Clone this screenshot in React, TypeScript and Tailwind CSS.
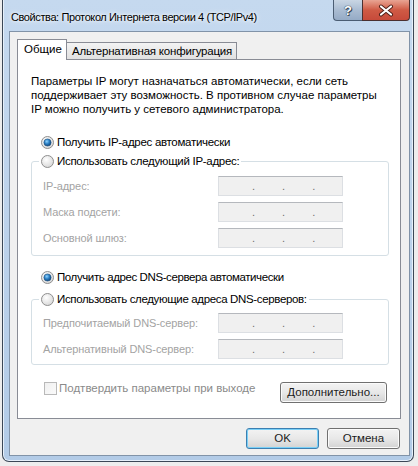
import React from 'react'

const FONT = "font-['Liberation_Sans',Arial,sans-serif]"

const Radio = ({ checked }: { checked?: boolean }) => (
  <svg width="13" height="13" viewBox="0 0 13 13" className="shrink-0">
    <defs>
      <radialGradient id="rbg" cx="40%" cy="35%" r="70%">
        <stop offset="0" stopColor="#ffffff" />
        <stop offset="1" stopColor="#d6d6d6" />
      </radialGradient>
      <radialGradient id="rdot" cx="40%" cy="35%" r="70%">
        <stop offset="0" stopColor="#8fd3ff" />
        <stop offset="0.5" stopColor="#2a7fc4" />
        <stop offset="1" stopColor="#0f3f70" />
      </radialGradient>
    </defs>
    <circle cx="6.5" cy="6.5" r="6" fill="url(#rbg)" stroke="#8f8f8f" />
    {checked && <circle cx="6.5" cy="6.5" r="3.6" fill="url(#rdot)" stroke="#1d4f7e" strokeWidth="0.6" />}
  </svg>
)

const IpBox = () => (
  <div className="w-[125px] h-[20px] bg-[#f0f0f0] border border-[#dcdfe3] border-t-[#b5b8bd] flex items-end pb-[3px] text-[#6f6f6f] text-[11px] leading-[11px]">
    <span className="ml-[33px]">.</span>
    <span className="ml-[27px]">.</span>
    <span className="ml-[27px]">.</span>
  </div>
)

const Field = ({ label }: { label: string }) => (
  <div className="flex items-center h-[20px]">
    <span className="w-[175px] text-[#a3a3a3] text-[11px] tracking-[-0.1px]">{label}</span>
    <IpBox />
  </div>
)

const WinButton = ({ children, primary, className }: { children: React.ReactNode; primary?: boolean; className?: string }) => (
  <div
    className={
      'h-[21px] rounded-[3px] border flex items-center justify-center text-[#1b1b1b] bg-gradient-to-b from-[#f3f3f3] via-[#e8e8e8] to-[#d3d3d3] ' +
      (primary
        ? 'border-[#3c7fb1] shadow-[inset_0_0_0_1px_#7ad0f7] '
        : 'border-[#707070] shadow-[inset_0_0_0_1px_#fbfbfb] ') +
      (className ?? '')
    }
  >
    {children}
  </div>
)

export default function App() {
  return (
    <div className={`w-[418px] h-[466px] overflow-hidden bg-[#ededed] pl-[2px] text-[11.5px] leading-[15px] text-black whitespace-nowrap ${FONT}`}>
      <div className="w-[412px] h-[462px] rounded-b-[7px] border border-t-0 border-[#3b4756] bg-gradient-to-b from-[#c5d9ef] via-[#bcd2eb] to-[#b2cbe7] shadow-[inset_1px_0_0_#e6f0fa,inset_-1px_0_0_#e6f0fa,inset_0_-1px_0_#e6f0fa] flex flex-col">
        {/* title bar */}
        <div className="h-[31px] flex items-start justify-between">
          <div className="pl-[8px] pt-[10px] text-[11px] tracking-[-0.4px] [text-shadow:0_0_6px_#ffffff,0_0_3px_#ffffff]">
            Свойства: Протокол Интернета версии 4 (TCP/IPv4)
          </div>
          <div className="flex mr-[3px]">
            <div className="w-[29px] h-[21px] rounded-bl-[4px] border border-t-0 border-r-0 border-[#4b5d73] bg-gradient-to-b from-[#c9d6e4] via-[#aabcd2] to-[#95abc6] flex items-center justify-center text-white font-bold text-[13px] [text-shadow:0_0_1px_#273546,0_0_1px_#273546,1px_1px_0_#3d4d60]">
              ?
            </div>
            <div className="w-[48px] h-[21px] rounded-br-[4px] border border-t-0 border-[#4b3030] bg-gradient-to-b from-[#e8a493] via-[#cf5a45] to-[#c64a3a] flex items-center justify-center">
              <svg width="16" height="13" viewBox="0 0 16 13">
                <path d="M3 2.5 L13 10.5 M13 2.5 L3 10.5" stroke="#4a1d16" strokeWidth="4" strokeLinecap="round" />
                <path d="M3 2.5 L13 10.5 M13 2.5 L3 10.5" stroke="#ffffff" strokeWidth="2.2" strokeLinecap="round" />
              </svg>
            </div>
          </div>
        </div>

        {/* client area */}
        <div className="ml-[6px] w-[401px] h-[425px] border border-[#8193a8] bg-[#f0f0f0] pl-[7px] pt-[7px] flex flex-col">
          {/* tabs */}
          <div className="flex items-end h-[20px]">
            <div className="relative z-10 h-[21px] -mb-[1px] w-[50px] border border-b-0 border-[#898c95] bg-white pl-[6px] pt-[2px]">
              Общие
            </div>
            <div className="h-[17px] -ml-[1px] w-[171px] border border-b-0 border-[#898c95] bg-gradient-to-b from-[#f3f3f3] to-[#e1e1e1] pl-[5px] pt-[1px] tracking-[-0.2px]">
              Альтернативная конфигурация
            </div>
          </div>

          {/* panel */}
          <div className="w-[384px] h-[360px] border border-[#898c95] bg-white pl-[13px] pr-[11px] pt-[13px] flex flex-col">
            <p className="leading-[14px] pt-[1px]">
              Параметры IP могут назначаться автоматически, если сеть
              <br />
              поддерживает эту возможность. В противном случае параметры
              <br />
              IP можно получить у сетевого администратора.
            </p>

            <div className="mt-[18px] ml-[10px] flex items-center gap-[3px] h-[16px] tracking-[-0.3px]">
              <Radio checked />
              <span>Получить IP-адрес автоматически</span>
            </div>

            <fieldset className="mt-[3px] border border-[#d5dfe5] rounded-[3px] pb-[7px]">
              <legend className="ml-[7px] px-[2px] flex items-center gap-[3px] h-[16px] tracking-[-0.3px]">
                <Radio />
                <span>Использовать следующий IP-адрес:</span>
              </legend>
              <div className="mt-[7px] pl-[11px] flex flex-col gap-[6px]">
                <Field label="IP-адрес:" />
                <Field label="Маска подсети:" />
                <Field label="Основной шлюз:" />
              </div>
            </fieldset>

            <div className="mt-[13px] ml-[10px] flex items-center gap-[3px] h-[16px] tracking-[-0.4px]">
              <Radio checked />
              <span>Получить адрес DNS-сервера автоматически</span>
            </div>

            <fieldset className="mt-[6px] border border-[#d5dfe5] rounded-[3px] pb-[5px]">
              <legend className="ml-[7px] px-[2px] flex items-center gap-[3px] h-[16px] tracking-[-0.35px]">
                <Radio />
                <span>Использовать следующие адреса DNS-серверов:</span>
              </legend>
              <div className="mt-[6px] pl-[11px] flex flex-col gap-[6px]">
                <Field label="Предпочитаемый DNS-сервер:" />
                <Field label="Альтернативный DNS-сервер:" />
              </div>
            </fieldset>

            <div className="mt-[17px] flex items-start justify-between pr-[2px]">
              <div className="flex items-center gap-[2px] pl-[13px] h-[13px] text-[#8a8a8a]">
                <div className="w-[13px] h-[13px] border border-[#b9b9b9] bg-gradient-to-br from-[#f0f0f0] to-[#fafafa]" />
                <span>Подтвердить параметры при выходе</span>
              </div>
              <WinButton className="w-[107px]">Дополнительно...</WinButton>
            </div>
          </div>

          {/* bottom buttons */}
          <div className="mt-[9px] flex gap-[8px] pl-[229px]">
            <WinButton primary className="w-[73px]">OK</WinButton>
            <WinButton className="w-[73px]">Отмена</WinButton>
          </div>
        </div>
      </div>
    </div>
  )
}
